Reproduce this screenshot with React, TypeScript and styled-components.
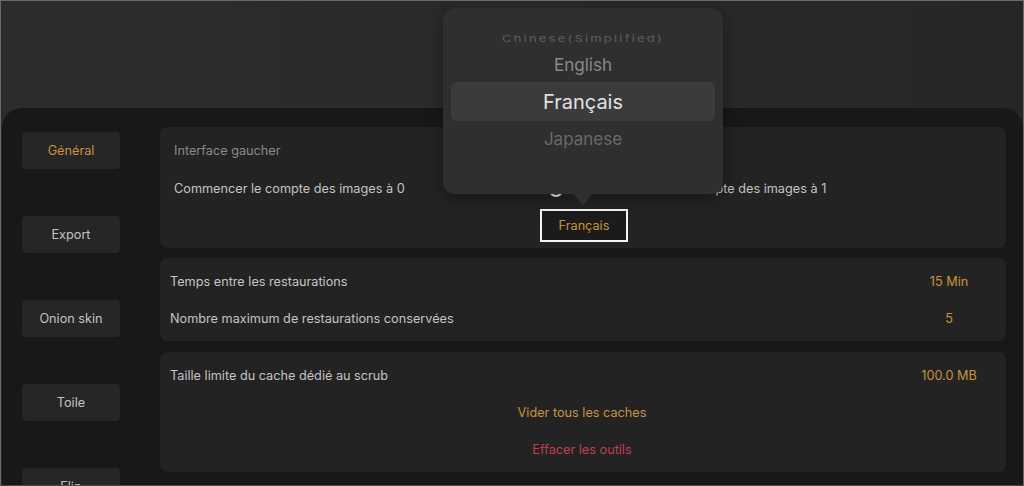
import React from "react";
import styled, { createGlobalStyle } from "styled-components";

const GlobalStyle = createGlobalStyle`
  html, body {
    margin: 0;
    padding: 0;
    background: #2a2a2a;
    font-family: Inter, "Noto Sans", "Liberation Sans", sans-serif;
  }
`;

const ORANGE = "#c8933c";

const Screen = styled.div`
  position: relative;
  width: 1024px;
  height: 486px;
  box-sizing: border-box;
  border: 1px solid #6a6a6a;
  border-bottom-color: #4a4a4a;
  background: linear-gradient(90deg, #2c2c2c 0%, #2a2a2a 55%, #262626 100%);
  overflow: hidden;
  display: flex;
  flex-direction: column;
`;

const TopSpace = styled.div`
  height: 107px;
  flex-shrink: 0;
`;

const Panel = styled.div`
  flex: 1;
  margin-left: 1px;
  background: #181818;
  border-radius: 20px 20px 0 0;
  display: flex;
  overflow: hidden;
`;

const Sidebar = styled.nav`
  width: 138px;
  flex-shrink: 0;
  padding: 24px 0 0 20px;
  box-sizing: border-box;
  display: flex;
  flex-direction: column;
  gap: 47px;
`;

const NavButton = styled.div<{ $active?: boolean }>`
  width: 98px;
  height: 37px;
  flex-shrink: 0;
  border-radius: 4px;
  background: #262626;
  color: ${(p) => (p.$active ? ORANGE : "#c4c4c4")};
  font-size: 12.7px;
  display: flex;
  align-items: center;
  justify-content: center;
`;

const Content = styled.div`
  flex: 1;
  padding: 19px 17px 0 20px;
  display: flex;
  flex-direction: column;
`;

const Card = styled.section<{ $pad?: number; $gap?: number }>`
  background: #232323;
  border-radius: 8px;
  margin-top: ${(p) => p.$gap ?? 0}px;
  padding: 5px 12px 4px ${(p) => p.$pad ?? 10}px;
  display: flex;
  flex-direction: column;
`;

const Row = styled.div<{ $center?: boolean }>`
  height: 37px;
  display: flex;
  align-items: center;
  justify-content: ${(p) => (p.$center ? "center" : "space-between")};
  font-size: 12.7px;
  color: #c4c4c4;
`;

const Muted = styled.span`
  color: #8a8a8a;
`;

const Value = styled.span`
  width: 90px;
  text-align: center;
  color: ${ORANGE};
`;

const Action = styled.span<{ $danger?: boolean }>`
  color: ${(p) => (p.$danger ? "#c53c4e" : ORANGE)};
`;

const Split = styled.div`
  height: 38px;
  display: flex;
  align-items: center;
  font-size: 12.7px;
  color: #c4c4c4;
`;

const Half = styled.div<{ $indent?: number }>`
  flex: 1 1 0;
  min-width: 0;
  display: flex;
  align-items: center;
  padding-left: ${(p) => p.$indent ?? 0}px;
`;

const Radio = styled.span`
  width: 10px;
  height: 10px;
  border-radius: 50%;
  border: 2px solid #f2f2f2;
  margin: 4px 7px 0 auto;
`;

const LangButton = styled.div`
  align-self: center;
  margin: 2px 0 2px;
  width: 88px;
  height: 33px;
  box-sizing: border-box;
  border: 2px solid #f4f4f4;
  background: #1b1b1b;
  color: ${ORANGE};
  font-size: 12.7px;
  display: flex;
  align-items: center;
  justify-content: center;
`;

const Popover = styled.div`
  position: absolute;
  left: 442px;
  top: 7px;
  width: 280px;
  height: 186px;
  border-radius: 12px;
  background: #2f2f2f;
  box-shadow: 0 4px 18px rgba(0, 0, 0, 0.35);
  padding: 20px 8px 0;
  box-sizing: border-box;
  display: flex;
  flex-direction: column;
  align-items: stretch;

  &::after {
    content: "";
    position: absolute;
    left: 131px;
    bottom: -12px;
    border-left: 9px solid transparent;
    border-right: 9px solid transparent;
    border-top: 12px solid #2f2f2f;
  }
`;

const Option = styled.div<{ $size: number; $color: string; $h: number }>`
  height: ${(p) => p.$h}px;
  display: flex;
  align-items: center;
  justify-content: center;
  font-size: ${(p) => p.$size}px;
  color: ${(p) => p.$color};
`;

const Squashed = styled.span`
  display: inline-block;
  letter-spacing: 2.2px;
  transform: scaleY(0.72);
`;

const Selected = styled(Option)`
  background: #3b3b3b;
  border-radius: 6px;
`;

export default function App() {
  return (
    <>
      <GlobalStyle />
      <Screen>
        <TopSpace />
        <Panel>
          <Sidebar>
            <NavButton $active>Général</NavButton>
            <NavButton>Export</NavButton>
            <NavButton>Onion skin</NavButton>
            <NavButton>Toile</NavButton>
            <NavButton>Flip</NavButton>
          </Sidebar>
          <Content>
            <Card $pad={14}>
              <Row>
                <Muted>Interface gaucher</Muted>
              </Row>
              <Split>
                <Half>
                  Commencer le compte des images à 0
                  <Radio />
                </Half>
                <Half $indent={29}>Commencer le compte des images à 1</Half>
              </Split>
              <LangButton>Français</LangButton>
            </Card>
            <Card $gap={10}>
              <Row>
                Temps entre les restaurations
                <Value>15 Min</Value>
              </Row>
              <Row>
                Nombre maximum de restaurations conservées
                <Value>5</Value>
              </Row>
            </Card>
            <Card $gap={11}>
              <Row>
                Taille limite du cache dédié au scrub
                <Value>100.0 MB</Value>
              </Row>
              <Row $center>
                <Action>Vider tous les caches</Action>
              </Row>
              <Row $center>
                <Action $danger>Effacer les outils</Action>
              </Row>
            </Card>
          </Content>
        </Panel>
        <Popover>
          <Option $size={13} $color="#5e5e5e" $h={19}>
            <Squashed>Chinese(Simplified)</Squashed>
          </Option>
          <Option $size={17} $color="#8a8a8a" $h={35}>
            English
          </Option>
          <Selected $size={20} $color="#e2e2e2" $h={39}>
            Français
          </Selected>
          <Option $size={17} $color="#6a6a6a" $h={36}>
            Japanese
          </Option>
        </Popover>
      </Screen>
    </>
  );
}
